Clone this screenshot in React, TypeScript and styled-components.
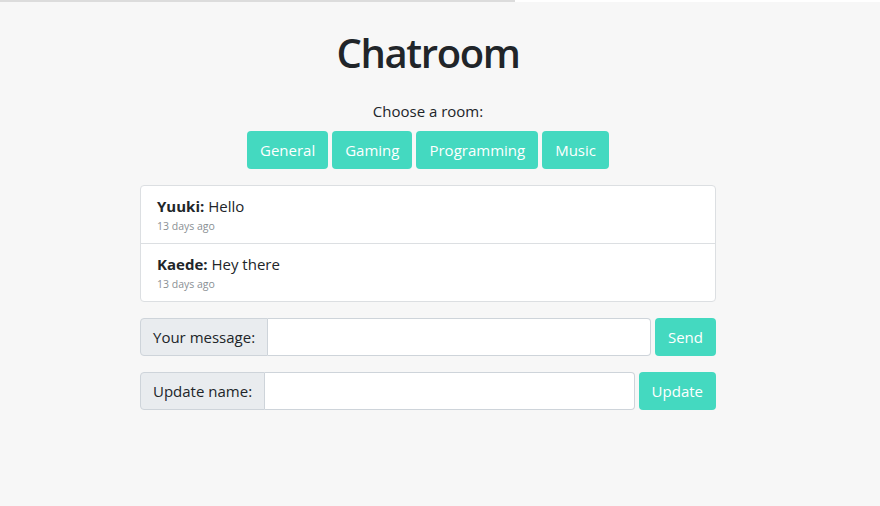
import React from "react";
import styled, { createGlobalStyle } from "styled-components";

const GlobalStyle = createGlobalStyle`
  html, body {
    margin: 0;
    padding: 0;
    background: #f7f7f7;
  }
  body {
    font-family: "Open Sans", "Noto Sans", sans-serif;
    color: #212529;
    font-size: 16px;
  }
  * {
    box-sizing: border-box;
  }
`;

const TopLine = styled.div`
  height: 2px;
  background: linear-gradient(
    to right,
    #dcdcdc 0,
    #dcdcdc 515px,
    #ffffff 515px,
    #ffffff 100%
  );
`;

// the page content sits in a column slightly left of the window centre
const Page = styled.div`
  width: 856px;
`;

const Container = styled.div`
  width: 576px;
  margin: 0 auto;
  padding-top: 27px;
  text-align: center;
`;

const Title = styled.h1`
  margin: 0;
  font-size: 40px;
  line-height: 48px;
  font-weight: 600;
  letter-spacing: -1.4px;
`;

const RoomLabel = styled.p`
  margin: 22px 0 8px;
  font-size: 15px;
  line-height: 24px;
`;

const RoomRow = styled.div`
  display: flex;
  justify-content: center;
  gap: 4px;
`;

const Button = styled.button`
  height: 38px;
  padding: 0 13px;
  border: none;
  border-radius: 4px;
  background: #44d9c0;
  color: #fff;
  font-family: inherit;
  font-size: 15px;
  cursor: pointer;
`;

const MessageList = styled.ul`
  list-style: none;
  margin: 16px 0 0;
  padding: 0;
  background: #fff;
  border: 1px solid #dcdfe2;
  border-radius: 4px;
  text-align: left;
`;

const MessageItem = styled.li`
  box-sizing: content-box;
  height: 41px;
  padding: 8px 16px;
  & + & {
    border-top: 1px solid #dcdfe2;
  }
`;

const MessageText = styled.div`
  font-size: 15px;
  line-height: 24px;
`;

const Author = styled.strong`
  font-weight: 700;
`;

const Timestamp = styled.div`
  font-size: 10.5px;
  line-height: 16px;
  color: #8a8f94;
`;

const FormRow = styled.form`
  display: flex;
  gap: 4px;
  margin-top: 16px;
`;

const InputGroup = styled.div`
  flex: 1;
  display: flex;
`;

const GroupLabel = styled.label`
  display: flex;
  align-items: center;
  height: 38px;
  padding: 0 12px;
  background: #e9ecef;
  border: 1px solid #ced4da;
  border-radius: 4px 0 0 4px;
  font-size: 15px;
  white-space: nowrap;
`;

const TextInput = styled.input`
  flex: 1;
  min-width: 0;
  height: 38px;
  border: 1px solid #ced4da;
  border-left: none;
  border-radius: 0 4px 4px 0;
  background: #fff;
  font-family: inherit;
  font-size: 15px;
  padding: 0 12px;
`;

const messages = [
  { author: "Yuuki", text: "Hello", time: "13 days ago" },
  { author: "Kaede", text: "Hey there", time: "13 days ago" },
];

const rooms = ["General", "Gaming", "Programming", "Music"];

export default function App() {
  return (
    <>
      <GlobalStyle />
      <TopLine />
      <Page>
        <Container>
          <Title>Chatroom</Title>
          <RoomLabel>Choose a room:</RoomLabel>
          <RoomRow>
            {rooms.map((r) => (
              <Button key={r}>{r}</Button>
            ))}
          </RoomRow>
          <MessageList>
            {messages.map((m, i) => (
              <MessageItem key={i}>
                <MessageText>
                  <Author>{m.author}:</Author> {m.text}
                </MessageText>
                <Timestamp>{m.time}</Timestamp>
              </MessageItem>
            ))}
          </MessageList>
          <FormRow onSubmit={(e) => e.preventDefault()}>
            <InputGroup>
              <GroupLabel>Your message:</GroupLabel>
              <TextInput type="text" />
            </InputGroup>
            <Button type="submit">Send</Button>
          </FormRow>
          <FormRow onSubmit={(e) => e.preventDefault()}>
            <InputGroup>
              <GroupLabel>Update name:</GroupLabel>
              <TextInput type="text" />
            </InputGroup>
            <Button type="submit">Update</Button>
          </FormRow>
        </Container>
      </Page>
    </>
  );
}
